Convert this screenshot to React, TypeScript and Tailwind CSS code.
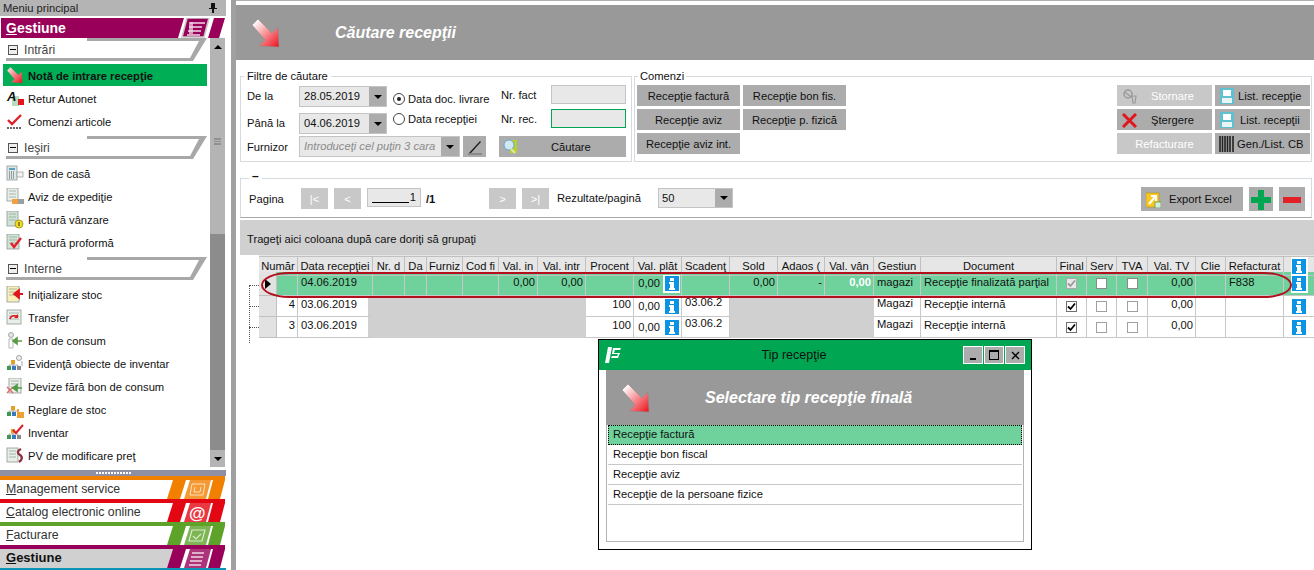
import type { ReactNode } from "react";

function RedArrow({ id }: { id: string }) {
  return (
    <svg width="30" height="32" viewBox="0 0 30 32" className="shrink-0">
      <defs>
        <linearGradient id={id} x1="0" y1="0" x2="1" y2="1">
          <stop offset="0.1" stopColor="#ffffff" />
          <stop offset="0.95" stopColor="#ee1c25" />
        </linearGradient>
      </defs>
      <path d="M1 8 L7 2 L21 16 L27 10 L28 30 L8 29 L14 23 Z" fill={"url(#" + id + ")"} stroke="#8a8a8a" strokeWidth="0.6" />
    </svg>
  );
}

function SmallArrow() {
  return (
    <svg width="18" height="18" viewBox="0 0 30 32">
      <defs>
        <linearGradient id="sm" x1="0" y1="0" x2="1" y2="1">
          <stop offset="0.1" stopColor="#ffd8d8" />
          <stop offset="0.95" stopColor="#e8202a" />
        </linearGradient>
      </defs>
      <path d="M1 8 L7 2 L21 16 L27 10 L28 30 L8 29 L14 23 Z" fill="url(#sm)" />
    </svg>
  );
}

function Doc({ x = 1, y = 1, w = 10, h = 13, fill = "#e8efe8" }: { x?: number; y?: number; w?: number; h?: number; fill?: string }) {
  return (
    <g>
      <rect x={x} y={y} width={w} height={h} fill={fill} stroke="#8f9a96" strokeWidth="0.8" />
      <path d={"M" + (x + 2) + " " + (y + 3) + "h" + (w - 4) + "M" + (x + 2) + " " + (y + 6) + "h" + (w - 4) + "M" + (x + 2) + " " + (y + 9) + "h" + (w - 4)} stroke="#9aa5a0" strokeWidth="0.8" />
    </g>
  );
}

function Blocks() {
  return (
    <g>
      <rect x="5" y="5" width="4" height="4" fill="#e8a020" />
      <rect x="1" y="11" width="4" height="4" fill="#3c9a50" />
      <rect x="6" y="11" width="4" height="4" fill="#3a78c0" />
      <rect x="11" y="11" width="4" height="4" fill="#8a8a8a" />
      <path d="M7 9v2M3 11v-1h9v1" stroke="#888" strokeWidth="0.7" fill="none" />
    </g>
  );
}

const menuIcons: Record<string, ReactNode> = {
  retur: (
    <>
      <rect x="6" y="6" width="7" height="10" fill="#b8dcc0" />
      <rect x="12" y="9" width="6" height="6" fill="#e2141c" />
      <text x="1" y="11" fontSize="13" fontWeight="700" fontStyle="italic" fill="#111" fontFamily="Liberation Sans, sans-serif">A</text>
    </>
  ),
  comenzi: (
    <>
      <path d="M2 7l4 4 9-9" stroke="#e2202a" strokeWidth="2.4" fill="none" />
      <path d="M1 15h15" stroke="#666" strokeWidth="2" strokeDasharray="2 1" />
    </>
  ),
  bon: (
    <>
      <rect x="1" y="1" width="10" height="14" fill="#dfe6e6" stroke="#8d9898" strokeWidth="0.8" />
      <rect x="3" y="3" width="6" height="2" fill="#5aa0c0" />
      <path d="M3 7h5M3 9h5M3 11h5M3 13h5" stroke="#555" strokeWidth="1" strokeDasharray="1 1" />
      <rect x="11" y="7" width="6" height="5" fill="#f4f4f4" stroke="#a0a0a0" strokeWidth="0.8" />
    </>
  ),
  aviz: (
    <>
      <Doc x={1} y={0} w={11} h={13} />
      <rect x="6" y="11" width="6" height="5" fill="#f0a040" />
      <rect x="12" y="11" width="6" height="5" fill="#9aa0a0" />
    </>
  ),
  factura: (
    <>
      <Doc x={1} y={0} w={11} h={15} fill="#cfe3d4" />
      <circle cx="13" cy="13" r="4" fill="#f0dc20" stroke="#807010" strokeWidth="0.6" />
      <path d="M13 11v4" stroke="#333" strokeWidth="1" />
    </>
  ),
  proforma: (
    <>
      <Doc x={1} y={0} w={12} h={15} fill="#cfe3d4" />
      <path d="M5 9l3 4 7-9" stroke="#e2202a" strokeWidth="2.4" fill="none" />
    </>
  ),
  initializare: (
    <>
      <Doc x={1} y={0} w={12} h={16} fill="#f8f0b8" />
      <path d="M17 8H10M13 4l-5 4 5 4z" stroke="#e2141c" strokeWidth="1.8" fill="#e2141c" />
    </>
  ),
  transfer: (
    <>
      <Doc x={1} y={1} w={14} h={14} />
      <path d="M4 10c1-4 5-4 8-2" stroke="#e2141c" strokeWidth="1.6" fill="none" />
      <path d="M12 5v4H8z" fill="#e2141c" />
    </>
  ),
  consum: (
    <>
      <circle cx="5" cy="3" r="2.5" fill="#e6e6e6" stroke="#8a9a90" strokeWidth="0.8" />
      <path d="M3 7h4v9H3z" fill="#fff" stroke="#a0a8a0" strokeWidth="0.8" />
      <path d="M16 9h-6M11 6l-4 3 4 3z" stroke="#5c9a48" strokeWidth="1.6" fill="#5c9a48" />
    </>
  ),
  evidenta: (
    <>
      <Blocks />
      <circle cx="13" cy="3" r="2.5" fill="#eee" stroke="#909090" strokeWidth="0.8" />
      <path d="M16 6v5" stroke="#aaa" strokeWidth="1" />
    </>
  ),
  devize: (
    <>
      <Doc x={3} y={0} w={12} h={15} />
      <path d="M1 9l6 6M7 9l-6 6" stroke="#e06868" strokeWidth="1.4" />
      <path d="M16 10h-6M11 7l-4 3 4 3z" stroke="#4f9a48" strokeWidth="1.6" fill="#4f9a48" />
    </>
  ),
  reglare: (
    <>
      <Blocks />
      <path d="M11 11h7v6h-7z" fill="#f0a030" />
      <path d="M12 11v-3" stroke="#f0a030" strokeWidth="2" />
    </>
  ),
  inventar: (
    <>
      <Blocks />
      <path d="M7 6l3 3 7-8" stroke="#e2202a" strokeWidth="2" fill="none" />
    </>
  ),
  pv: (
    <>
      <Doc x={1} y={1} w={11} h={14} />
      <path d="M15 2c-4 2-4 4-1 6s2 5-1 7" stroke="#903040" strokeWidth="2.4" fill="none" />
    </>
  ),
};

function MenuItem({ icon, label, active }: { icon: string; label: string; active?: boolean }) {
  return (
    <div className={active ? "flex h-[22px] w-[204px] items-center bg-[#00ae55] pl-[3px] font-bold" : "flex h-[23px] w-[204px] items-center pl-[3px]"}>
      <span className="flex w-[22px] justify-start">
        {active ? (
          <SmallArrow />
        ) : (
          <svg width="18" height="18" viewBox="0 0 18 18">
            {menuIcons[icon]}
          </svg>
        )}
      </span>
      <span className="whitespace-nowrap pt-[2px]">{label}</span>
    </div>
  );
}

function GroupHeader({ label }: { label: string }) {
  return (
    <div className="relative flex h-[23px] w-[204px] items-center pl-[5px]">
      <svg width="204" height="23" viewBox="0 0 204 23" className="absolute left-0 top-0">
        <path d="M84 0H204L190 23H3V20H187L196 3H84Z" fill="#a8a8a8" />
      </svg>
      <span className="flex h-[10px] w-[10px] items-center justify-center border border-[#555] bg-[#eee]">
        <span className="h-px w-[6px] bg-black" />
      </span>
      <span className="ml-[6px] pt-[2px] text-[12.2px] text-[#444]">{label}</span>
    </div>
  );
}

function BigTab({ label, color, icon, selected }: { label: string; color: string; icon: ReactNode; selected?: boolean }) {
  return (
    <div className={selected ? "relative flex h-[23px] items-end pb-px pl-[6px] text-[13px] font-bold" : "relative flex h-[23px] items-end pb-px pl-[6px] text-[12.3px] text-[#333]"}>
      <svg width="225" height="23" viewBox="0 0 225 23" className="absolute left-0 top-0">
        {selected && <path d="M0 4H173L167 23H0Z" fill="#d0d0d0" />}
        <rect x="0" y="0" width="225" height="4" fill={color} />
        <path d="M173 4H186L180 23H167Z" fill={color} />
        <path d="M213 4H225L220 23H208Z" fill={color} />
        <path d="M190 4H211L206 23H184Z" fill={color} opacity="0.8" />
        {icon}
      </svg>
      <span className="relative whitespace-nowrap">
        <span className="underline">{label[0]}</span>
        {label.slice(1)}
      </span>
    </div>
  );
}

function Sidebar() {
  return (
    <aside className="flex h-[570px] w-[226px] shrink-0 flex-col bg-white">
      <div className="flex h-[16px] items-center justify-between bg-[#b4b4b4] pl-[3px] pr-[9px] text-[#222]">
        <span>Meniu principal</span>
        <svg width="8" height="10" viewBox="0 0 8 10">
          <path d="M2 0h4v5h2v1H5v4H3V6H0V5h2z" fill="#111" />
        </svg>
      </div>
      <div className="relative mt-[2px] flex h-[20px] items-center pl-[6px] text-[14px] font-bold text-white">
        <svg width="225" height="20" viewBox="0 0 225 20" className="absolute left-0 top-0">
          <path d="M1 0H184L178 20H1Z" fill="#98005a" />
          <path d="M187 0H209L204 19H182Z" fill="#98005a" stroke="#c8c8c8" strokeWidth="1.6" />
          <path d="M214 0H225L219 20H208Z" fill="#98005a" />
          <path d="M190 5h15M189 9h13M188 13h13M187 17h13" stroke="#f0d8e6" strokeWidth="1.6" />
          <rect x="189" y="4" width="4" height="12" fill="#f0d8e6" opacity="0.7" />
        </svg>
        <span className="relative">
          <span className="underline">G</span>estiune
        </span>
      </div>
      <div className="flex h-[431px] pl-[3px] text-[#111]">
        <div className="flex w-[207px] flex-col">
          <GroupHeader label="Intrări" />
          <div className="mt-[3px]">
            <MenuItem icon="nota" label="Notă de intrare recepţie" active />
          </div>
          <div className="mt-px">
            <MenuItem icon="retur" label="Retur Autonet" />
            <MenuItem icon="comenzi" label="Comenzi articole" />
          </div>
          <div className="mt-[3px]">
            <GroupHeader label="Ieşiri" />
          </div>
          <div className="mt-[3px]">
            <MenuItem icon="bon" label="Bon de casă" />
            <MenuItem icon="aviz" label="Aviz de expediţie" />
            <MenuItem icon="factura" label="Factură vânzare" />
            <MenuItem icon="proforma" label="Factură proformă" />
          </div>
          <div className="mt-[3px]">
            <GroupHeader label="Interne" />
          </div>
          <div className="mt-[3px]">
            <MenuItem icon="initializare" label="Iniţializare stoc" />
            <MenuItem icon="transfer" label="Transfer" />
            <MenuItem icon="consum" label="Bon de consum" />
            <MenuItem icon="evidenta" label="Evidenţă obiecte de inventar" />
            <MenuItem icon="devize" label="Devize fără bon de consum" />
            <MenuItem icon="reglare" label="Reglare de stoc" />
            <MenuItem icon="inventar" label="Inventar" />
            <MenuItem icon="pv" label="PV de modificare preţ" />
          </div>
        </div>
        <div className="flex h-[429px] w-[15px] flex-col bg-[#8c8c8c]">
          <div className="flex h-[196px] flex-col items-center bg-[#b4b4b4]">
            <span className="mt-[7px] h-0 w-0 border-x-[4px] border-b-[4px] border-x-transparent border-b-black" />
            <span className="mt-[89px] h-[7px] w-[7px] border-y border-[#909090] bg-[linear-gradient(#909090_1px,transparent_1px)] bg-[length:7px_2px]" />
          </div>
          <div className="flex-1" />
          <div className="flex h-[17px] items-center justify-center bg-[#b4b4b4]">
            <span className="h-0 w-0 border-x-[4px] border-t-[4px] border-x-transparent border-t-black" />
          </div>
        </div>
      </div>
      <div className="mt-[3px] flex h-[6px] items-center justify-center bg-[#8f8fa3]">
        <span className="h-[2px] w-[35px] bg-[linear-gradient(90deg,#fff_2px,transparent_2px)] bg-[length:3px_2px]" />
      </div>
      <BigTab
        label="Management service"
        color="#f18000"
        icon={<path d="M192 8h13l-2 11h-13zM195 11l-1 5h6l1-5" stroke="#fff" strokeWidth="1" fill="none" opacity="0.7" />}
      />
      <BigTab
        label="Catalog electronic online"
        color="#e30613"
        icon={<text x="189" y="20" fontSize="17" fontWeight="700" fill="#fff" fontFamily="Liberation Sans, sans-serif">@</text>}
      />
      <BigTab
        label="Facturare"
        color="#5da329"
        icon={<path d="M192 8h13l-3 11h-13zM193 14l3 3 5-5" stroke="#d8ecc8" strokeWidth="1.2" fill="none" />}
      />
      <BigTab
        label="Gestiune"
        color="#98005a"
        selected
        icon={<path d="M192 8h12M191 12h12M190 16h12M189 20h12" stroke="#f0d8e6" strokeWidth="1.6" />}
      />
      <div className="h-[2px] bg-[#0a93b4]" />
    </aside>
  );
}

function Button({ children, disabled, className }: { children: ReactNode; disabled?: boolean; className?: string }) {
  return (
    <div className={(disabled ? "bg-[#c8c8c8] text-white " : "bg-[#acacac] text-[#111] ") + "flex items-center justify-center whitespace-nowrap pt-px " + (className ?? "")}>
      {children}
    </div>
  );
}

function ComboArrow({ w = "w-[17px]" }: { w?: string }) {
  return (
    <span className={"flex h-full items-center justify-center bg-[#acacac] " + w}>
      <span className="h-0 w-0 border-x-[4px] border-t-[4px] border-x-transparent border-t-black" />
    </span>
  );
}

function DateBox({ value }: { value: string }) {
  return (
    <div className="flex h-[21px] w-[88px] items-center justify-between border border-[#c4c4c4] bg-[#e8e8e8] pl-[4px]">
      <span>{value}</span>
      <ComboArrow />
    </div>
  );
}

function Radio({ label, checked }: { label: string; checked?: boolean }) {
  return (
    <div className="flex h-[20px] items-center">
      <span className="flex h-[12px] w-[12px] items-center justify-center rounded-full border border-[#444] bg-white">
        {checked && <span className="h-[4px] w-[4px] rounded-full bg-[#222]" />}
      </span>
      <span className="ml-[3px] whitespace-nowrap">{label}</span>
    </div>
  );
}

function Printer() {
  return (
    <svg width="14" height="16" viewBox="0 0 14 16" className="shrink-0">
      <rect x="0" y="0" width="14" height="16" fill="#5fc0d0" />
      <rect x="3" y="2" width="8" height="6" fill="#fff" />
      <rect x="2" y="10" width="10" height="5" fill="#e8f4f6" />
    </svg>
  );
}

function Filters() {
  return (
    <fieldset className="h-[93px] w-[392px] border border-[#d4dade] pl-[6px] pt-[3px]">
      <legend className="-ml-[3px] px-[3px] leading-[14px]">Filtre de căutare</legend>
      <div className="flex h-[48px]">
        <div className="w-[146px]">
          <div className="flex h-[21px] items-center">
            <span className="w-[52px]">De la</span>
            <DateBox value="28.05.2019" />
          </div>
          <div className="mt-[6px] flex h-[21px] items-center">
            <span className="w-[52px]">Până la</span>
            <DateBox value="04.06.2019" />
          </div>
        </div>
        <div className="w-[108px] pt-[3px]">
          <Radio label="Data doc. livrare" checked />
          <Radio label="Data recepţiei" />
        </div>
        <div className="-mt-[1px]">
          <div className="flex h-[19px] items-center">
            <span className="w-[50px] pt-[2px]">Nr. fact</span>
            <span className="h-[19px] w-[75px] border border-[#c4c4c4] bg-[#e8e8e8]" />
          </div>
          <div className="mt-[5px] flex h-[19px] items-center">
            <span className="w-[50px] pt-[2px]">Nr. rec.</span>
            <span className="h-[19px] w-[75px] border border-[#00a651] bg-[#e8e8e8]" />
          </div>
        </div>
      </div>
      <div className="mt-[2px] flex h-[21px] items-center">
        <span className="w-[52px] pt-[2px]">Furnizor</span>
        <div className="flex h-[21px] w-[161px] items-center justify-between border border-[#c4c4c4] bg-[#e8e8e8] pl-[4px] italic text-[#8a8a8a]">
          <span className="whitespace-nowrap">Introduceţi cel puţin 3 cara</span>
          <ComboArrow w="w-[18px] shrink-0" />
        </div>
        <Button className="ml-[3px] h-[21px] w-[23px]">
          <svg width="16" height="16" viewBox="0 0 16 16">
            <path d="M2 14L13 2l1 1L4 14z" fill="#222" />
            <path d="M1 15h14" stroke="#666" strokeWidth="1" />
          </svg>
        </Button>
        <div className="ml-[13px] flex h-[21px] w-[127px] items-center bg-[#acacac] pl-[4px]">
          <svg width="15" height="15" viewBox="0 0 15 15" className="shrink-0">
            <rect x="7" y="1" width="7" height="13" fill="#b8d030" />
            <circle cx="6" cy="6" r="5" fill="#cfe8f4" stroke="#6aa8c8" />
            <path d="M8 10l4 4" stroke="#e8e8a0" strokeWidth="2" />
          </svg>
          <span className="ml-[33px] pt-px">Căutare</span>
        </div>
      </div>
    </fieldset>
  );
}

function Commands() {
  return (
    <fieldset className="ml-[2px] h-[93px] w-[678px] border border-[#d4dade] pl-[2px] pr-px pt-[2px]">
      <legend className="ml-px px-[2px] leading-[14px]">Comenzi</legend>
      <div className="flex justify-between">
        <div className="grid grid-cols-[103px_103px] grid-rows-[21px_21px_21px] gap-x-[3px] gap-y-[3px]">
          <Button>Recepţie factură</Button>
          <Button>Recepţie bon fis.</Button>
          <Button>Recepţie aviz</Button>
          <Button>Recepţie p. fizică</Button>
          <Button>Recepţie aviz int.</Button>
        </div>
        <div className="grid grid-cols-[95px_95px] grid-rows-[21px_21px_21px] gap-x-[3px] gap-y-[3px]">
          <Button disabled className="justify-start pl-[5px]">
            <svg width="15" height="15" viewBox="0 0 15 15" className="shrink-0">
              <circle cx="6" cy="5" r="4" fill="none" stroke="#999" strokeWidth="1.5" />
              <path d="M3 3l6 5M10 7h4l-1 7h-2z" stroke="#999" strokeWidth="1.2" fill="none" />
            </svg>
            <span className="ml-[14px]">Stornare</span>
          </Button>
          <Button className="justify-start pl-[5px]">
            <Printer />
            <span className="ml-[4px]">List. recepţie</span>
          </Button>
          <Button className="justify-start pl-[5px]">
            <svg width="15" height="15" viewBox="0 0 15 15" className="shrink-0">
              <path d="M1 1l13 13M14 1L1 14" stroke="#e2141c" strokeWidth="3" />
            </svg>
            <span className="ml-[14px]">Ştergere</span>
          </Button>
          <Button className="justify-start pl-[5px]">
            <Printer />
            <span className="ml-[6px]">List. recepţii</span>
          </Button>
          <Button disabled>Refacturare</Button>
          <Button className="justify-start pl-[4px]">
            <svg width="16" height="16" viewBox="0 0 16 16" className="shrink-0">
              <path d="M1 0v16M3.5 0v16M6 0v16M8.5 0v16M11 0v16M14 0v16" stroke="#222" strokeWidth="1.6" />
            </svg>
            <span className="ml-[2px]">Gen./List. CB</span>
          </Button>
        </div>
      </div>
    </fieldset>
  );
}

function Pager() {
  return (
    <fieldset className="mt-[9px] h-[47px] w-[1072px] border border-[#d4dade] border-b-[#a8a8a8] pl-[8px] pt-[3px]">
      <legend className="px-[3px] pb-[4px] text-[12px] font-bold leading-[10px]">–</legend>
      <div className="flex items-start">
        <span className="mt-[3px] w-[52px]">Pagina</span>
        <Button disabled className="h-[21px] w-[27px]">|&lt;</Button>
        <Button disabled className="ml-[6px] h-[21px] w-[27px]">&lt;</Button>
        <div className="ml-[6px] flex h-[19px] w-[54px] items-center justify-end border border-[#c4c4c4] bg-[#e8e8e8] pr-[4px]">
          <span className="mr-px h-[11px] w-[37px] border-b border-black" />
          <span>1</span>
        </div>
        <span className="ml-[5px] mt-[3px] w-[14px] font-bold">/1</span>
        <Button disabled className="ml-[49px] h-[21px] w-[27px]">&gt;</Button>
        <Button disabled className="ml-[6px] h-[21px] w-[27px]">&gt;|</Button>
        <span className="ml-[8px] mt-[2px] w-[101px] whitespace-nowrap">Rezultate/pagină</span>
        <div className="flex h-[20px] w-[75px] items-center justify-between border border-[#c4c4c4] bg-[#e8e8e8] pl-[3px]">
          <span>50</span>
          <ComboArrow />
        </div>
        <Button className="-mt-px ml-[408px] h-[24px] w-[102px] justify-start pl-[5px]">
          <svg width="15" height="16" viewBox="0 0 15 16" className="shrink-0">
            <rect x="0" y="1" width="13" height="14" fill="#f8c820" stroke="#b89010" strokeWidth="0.6" />
            <path d="M3 12l6-7M5 4h5v5" stroke="#fff" strokeWidth="2" fill="none" />
            <rect x="9" y="10" width="6" height="6" fill="#d8ecd8" stroke="#3a8a40" strokeWidth="0.6" />
          </svg>
          <span className="ml-[8px]">Export Excel</span>
        </Button>
        <Button className="-mt-px ml-[6px] h-[24px] w-[24px]">
          <svg width="20" height="20" viewBox="0 0 20 20">
            <path d="M7 0h6v7h7v6h-7v7H7v-7H0V7h7z" fill="#00a651" />
          </svg>
        </Button>
        <Button className="-mt-px ml-[6px] h-[24px] w-[26px]">
          <svg width="18" height="6" viewBox="0 0 18 6">
            <rect width="18" height="6" fill="#e2202a" />
          </svg>
        </Button>
      </div>
    </fieldset>
  );
}

function Info() {
  return (
    <span className="flex h-[18px] w-[17px] items-center justify-center bg-white">
      <svg width="14" height="15" viewBox="0 0 14 15">
        <rect width="14" height="15" fill="#0c94e4" />
        <rect x="5" y="2" width="4" height="3" fill="#fff" />
        <path d="M4 6h5v6h1v2H4v-2h1V8H4z" fill="#fff" />
      </svg>
    </span>
  );
}

function Check({ state }: { state: "on" | "off" | "muted" | "blank" }) {
  return (
    <span className={state === "blank" ? "flex h-[11px] w-[11px] items-center justify-center border border-[#8a8a8a] bg-white" : state === "off" ? "flex h-[11px] w-[11px] items-center justify-center border border-[#a0a0a0] bg-white" : state === "muted" ? "flex h-[11px] w-[11px] items-center justify-center border border-[#a8a8a8] bg-[#e8e8e8]" : "flex h-[11px] w-[11px] items-center justify-center border border-[#707070] bg-white"}>
      {(state === "on" || state === "muted") && (
        <svg width="9" height="9" viewBox="0 0 9 9">
          <path d="M1 4.5l2.5 2.5L8 1.5" stroke={state === "on" ? "#000" : "#9a9a9a"} strokeWidth="1.8" fill="none" />
        </svg>
      )}
    </span>
  );
}

const headers: [string, string?][] = [
  ["Număr", "col-span-2"],
  ["Data recepţiei"],
  ["Nr. d"],
  ["Da"],
  ["Furniz"],
  ["Cod fi"],
  ["Val. in"],
  ["Val. intr"],
  ["Procent"],
  ["Val. plăt"],
  ["Scadenţ"],
  ["Sold"],
  ["Adaos ("],
  ["Val. vân"],
  ["Gestiun"],
  ["Document"],
  ["Final"],
  ["Serv"],
  ["TVA"],
  ["Val. TV"],
  ["Clie"],
  ["Refacturat"],
];

const gridCols = "grid w-[1055px] grid-cols-[18px_21px_75px_32px_22px_36px_36px_39px_48px_48px_48px_48px_48px_47px_49px_47px_136px_30px_30px_31px_48px_30px_58px_30px]";

function Td({ children, right, className }: { children?: ReactNode; right?: boolean; className?: string }) {
  return (
    <div className={(right ? "justify-end pr-[2px] " : "pl-[3px] ") + "flex items-start overflow-hidden whitespace-nowrap border-b border-r border-[#c8c8c8] " + (className ?? "")}>
      {children}
    </div>
  );
}

function Pay() {
  return (
    <div className="flex items-center justify-end border-b border-r border-[#c8c8c8] pr-[1px]">
      <span className="mr-[3px]">0,00</span>
      <Info />
    </div>
  );
}

function CheckCell({ state }: { state: "on" | "off" | "muted" | "blank" }) {
  return (
    <div className="flex items-center justify-center border-b border-r border-[#c8c8c8]">
      <Check state={state} />
    </div>
  );
}

function InfoCell() {
  return (
    <div className="flex items-center justify-center border-b border-[#c8c8c8]">
      <Info />
    </div>
  );
}

function GreyRow({ n }: { n: string }) {
  return (
    <div className={gridCols + " h-[21px] bg-white"}>
      <div className="border-b border-r border-[#c0c0c0] bg-[#e2e2e2]" />
      <Td right>{n}</Td>
      <div className="flex items-start border-b border-r-[5px] border-[#c8c8c8] border-r-[#d0d0d0] pl-[3px]">03.06.2019</div>
      <div className="col-span-6 bg-[#d0d0d0]" />
      <Td right>100</Td>
      <Pay />
      <Td className="leading-[13px]">03.06.2</Td>
      <div className="col-span-3 bg-[#d0d0d0]" />
      <Td className="leading-[14px]">Magazi</Td>
      <Td>Recepţie internă</Td>
      <CheckCell state="on" />
      <CheckCell state="off" />
      <CheckCell state="off" />
      <Td right>0,00</Td>
      <Td />
      <Td />
      <InfoCell />
    </div>
  );
}

function GreenTd({ children, right, className }: { children?: ReactNode; right?: boolean; className?: string }) {
  return (
    <Td right={right} className={"pt-[2px] " + (className ?? "")}>
      {children}
    </Td>
  );
}

function DataGrid() {
  return (
    <div className="relative h-[83px] pl-[19px]">
      <span className="absolute left-[9px] top-[30px] h-[58px] border-l border-dotted border-[#555]" />
      <span className="absolute left-[9px] top-[30px] w-[10px] border-t border-dotted border-[#555]" />
      <span className="absolute left-[9px] top-[51px] w-[10px] border-t border-dotted border-[#555]" />
      <span className="absolute left-[9px] top-[72px] w-[10px] border-t border-dotted border-[#555]" />
      <div className={gridCols + " h-[17px] bg-[#e6e6e6] pt-px"}>
        {headers.map(([label, span]) => (
          <div key={label} className={"flex items-center justify-center overflow-hidden whitespace-nowrap border-b border-r border-t border-[#c0c0c0] " + (span ?? "")}>
            {label}
          </div>
        ))}
        <div className="flex items-center justify-center border-y border-[#c0c0c0]">
          <Info />
        </div>
      </div>
      <div className={gridCols + " h-[24px] bg-[#6fd29c]"}>
        <div className="flex items-center justify-center border-b border-r border-[#c0c0c0] bg-[#e2e2e2]">
          <span className="h-0 w-0 border-y-[5px] border-l-[6px] border-y-transparent border-l-black" />
        </div>
        <GreenTd />
        <GreenTd>04.06.2019</GreenTd>
        <GreenTd />
        <GreenTd />
        <GreenTd />
        <GreenTd />
        <GreenTd right>0,00</GreenTd>
        <GreenTd right>0,00</GreenTd>
        <GreenTd />
        <Pay />
        <GreenTd />
        <GreenTd right>0,00</GreenTd>
        <GreenTd right>-</GreenTd>
        <GreenTd right className="font-bold text-white">0,00</GreenTd>
        <GreenTd>magazi</GreenTd>
        <GreenTd>Recepţie finalizată parţial</GreenTd>
        <CheckCell state="muted" />
        <CheckCell state="blank" />
        <CheckCell state="blank" />
        <GreenTd right>0,00</GreenTd>
        <GreenTd />
        <GreenTd>F838</GreenTd>
        <InfoCell />
      </div>
      <GreyRow n="4" />
      <GreyRow n="3" />
      <span className="absolute left-[21px] top-[17px] h-[26px] w-[1031px] rounded-[28px/13px] border-2 border-[#b3101e]" />
    </div>
  );
}

function WinButton({ children }: { children: ReactNode }) {
  return <span className="flex h-[18px] w-[20px] items-center justify-center border border-white bg-[#acacac]">{children}</span>;
}

function ListRow({ label, selected }: { label: string; selected?: boolean }) {
  return (
    <div className={selected ? "h-[20px] border border-dotted border-black bg-[#6fd29c] pl-[4px] leading-[16px]" : "h-[20px] border-b border-[#c8c8c8] pl-[5px] leading-[18px]"}>
      {label}
    </div>
  );
}

function Dialog() {
  return (
    <div className="absolute left-[598px] top-[339px] flex h-[211px] w-[434px] flex-col border border-black bg-white">
      <div className="flex h-[30px] shrink-0 items-center bg-[#00a651] pl-[6px] pr-[6px]">
        <svg width="17" height="16" viewBox="0 0 17 16" className="shrink-0">
          <path d="M3 0h4L4 16H0z" fill="#fff" />
          <path d="M8 1h8l-1 2H10l-1 3h6l-2 5H6l1-2h5l1-2H7z" fill="#fff" />
        </svg>
        <span className="flex-1 pl-[3px] text-center text-[12.5px] leading-none">Tip recepţie</span>
        <span className="flex gap-px">
          <WinButton>
            <span className="mt-[7px] h-[2px] w-[6px] bg-black" />
          </WinButton>
          <WinButton>
            <span className="h-[10px] w-[10px] border border-t-2 border-black" />
          </WinButton>
          <WinButton>
            <svg width="9" height="9" viewBox="0 0 9 9">
              <path d="M1 1l7 7M8 1L1 8" stroke="#000" strokeWidth="1.4" />
            </svg>
          </WinButton>
        </span>
      </div>
      <div className="mx-[7px] flex h-[55px] shrink-0 items-center bg-[#999999] pl-[15px]">
        <RedArrow id="dlg" />
        <span className="ml-[54px] whitespace-nowrap text-[16px] font-bold italic leading-none text-white">Selectare tip recepţie finală</span>
      </div>
      <div className="mx-[7px] h-[117px] border border-t-0 border-[#b4b4b4] px-px">
        <ListRow label="Recepţie factură" selected />
        <ListRow label="Recepţie bon fiscal" />
        <ListRow label="Recepţie aviz" />
        <ListRow label="Recepţie de la persoane fizice" />
      </div>
    </div>
  );
}

export default function App() {
  return (
    <div className="relative flex h-[570px] w-[1314px] overflow-hidden bg-white font-['Liberation_Sans',Arial,sans-serif] text-[11.2px] text-[#111]">
      <Sidebar />
      <div className="ml-[5px] w-[5px] shrink-0 bg-[#a0a0a0]" />
      <main className="flex w-[1078px] flex-col">
        <div className="h-[5px] border-t border-[#b0b0b0]" />
        <div className="flex h-[55px] items-center bg-[#999999] pl-[15px]">
          <RedArrow id="hdr" />
          <span className="ml-[54px] text-[16px] font-bold italic leading-none text-white">Căutare recepţii</span>
        </div>
        <div className="pl-[4px]">
          <div className="mt-[9px] flex">
            <Filters />
            <Commands />
          </div>
          <Pager />
          <div className="mt-[2px] flex h-[35px] items-center bg-[#d0d0d0] pl-[7px] pt-[3px]">Trageţi aici coloana după care doriţi să grupaţi</div>
          <DataGrid />
        </div>
      </main>
      <Dialog />
    </div>
  );
}
